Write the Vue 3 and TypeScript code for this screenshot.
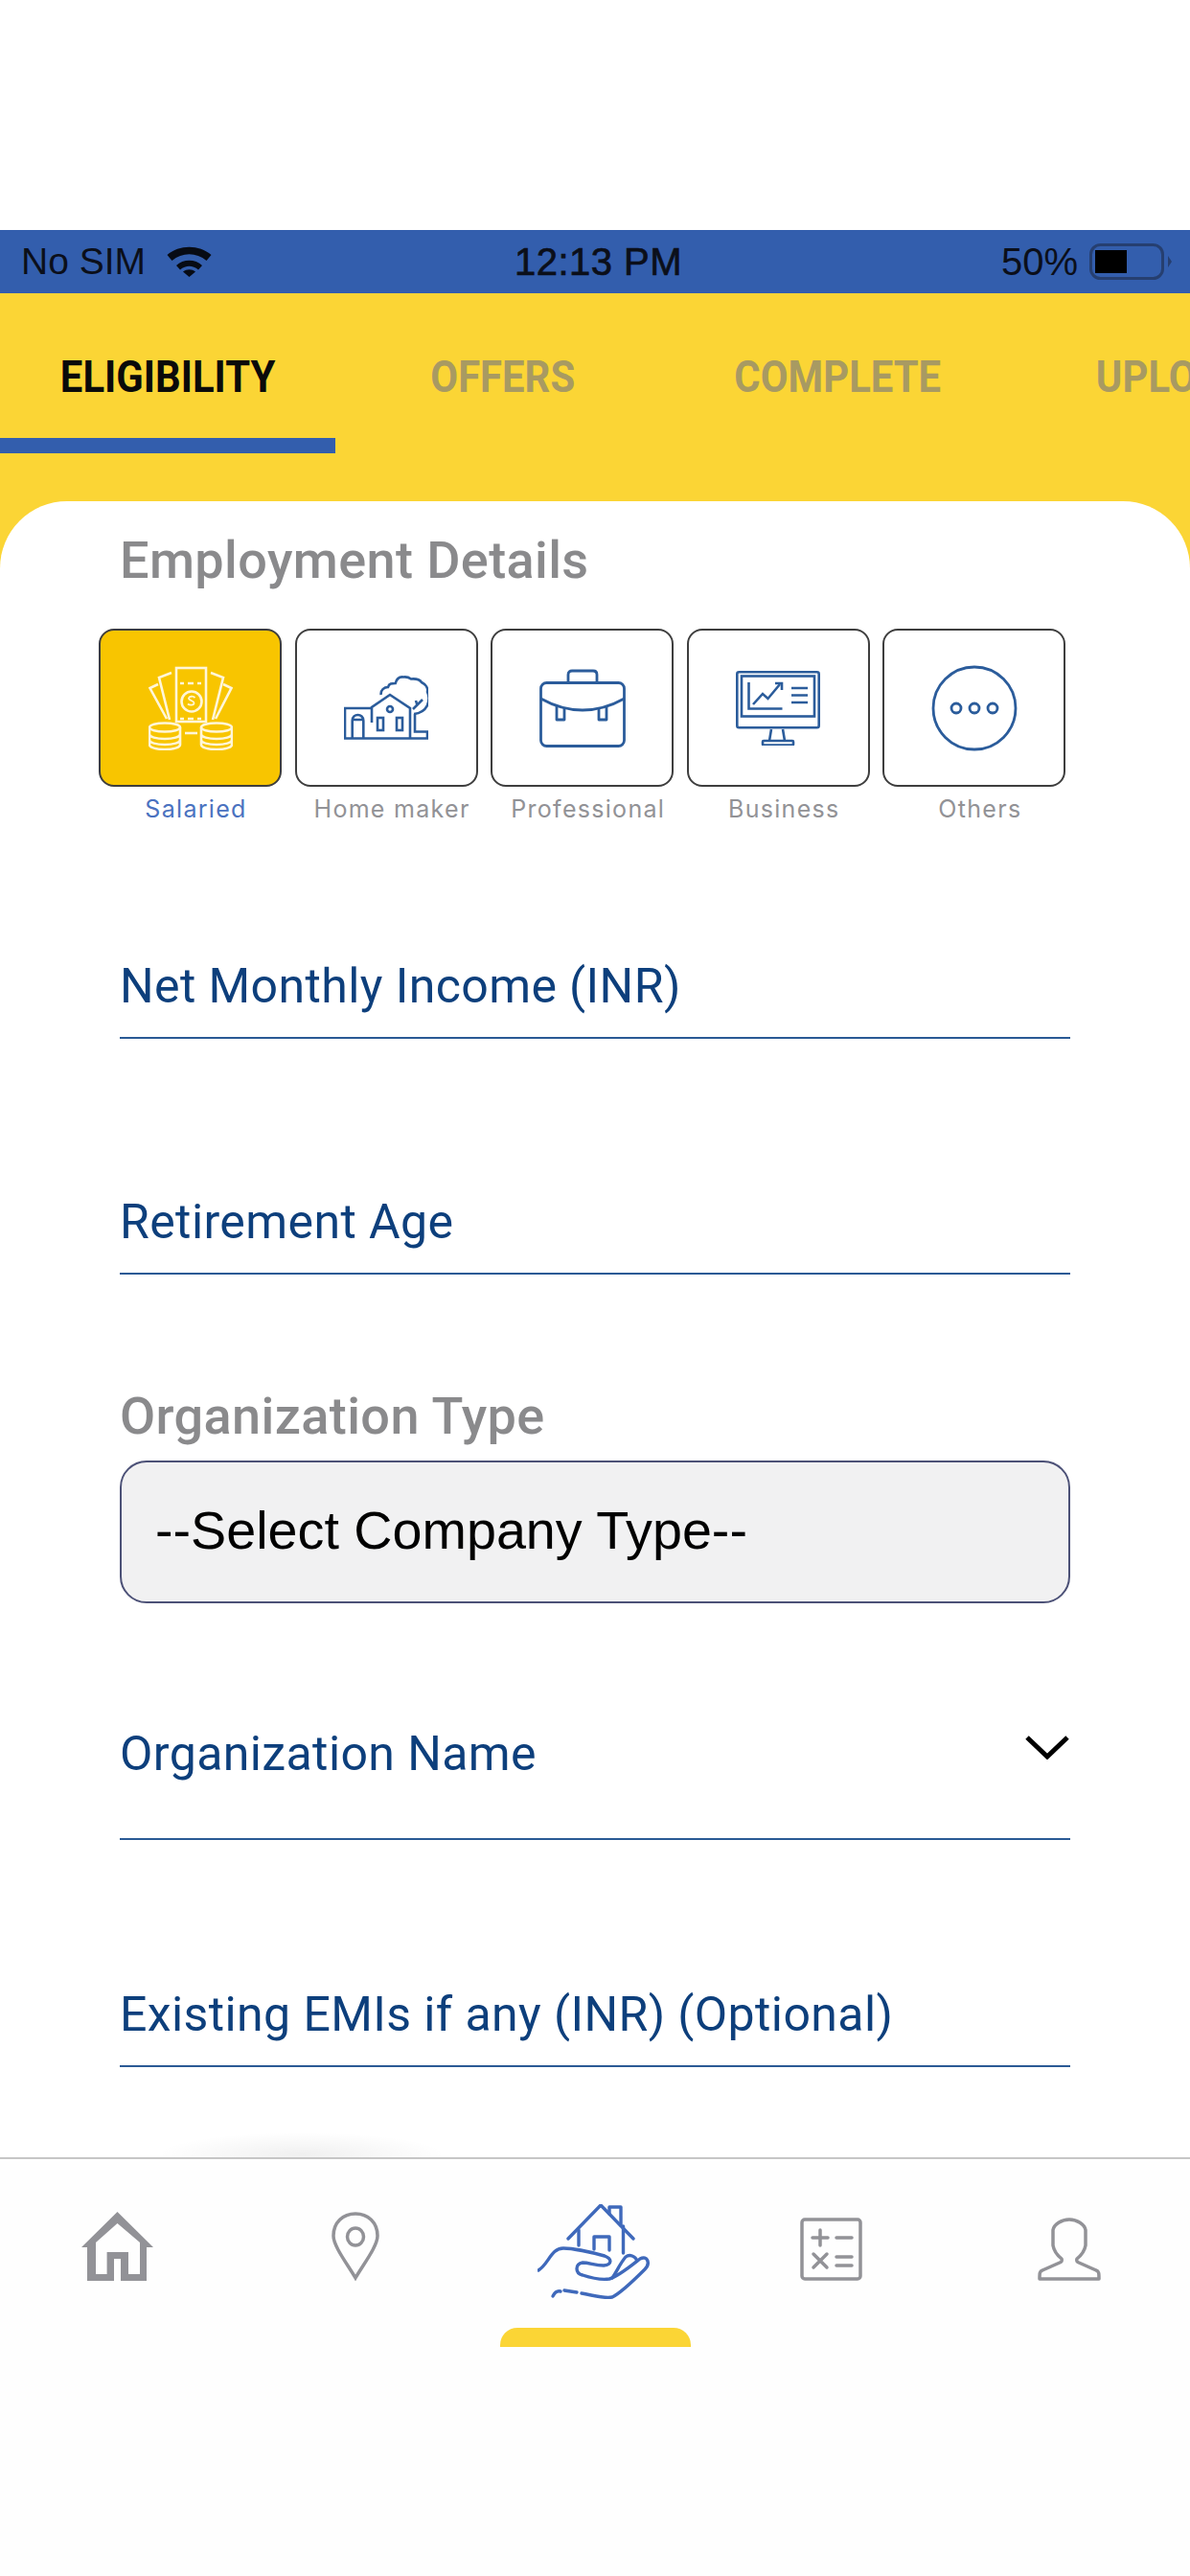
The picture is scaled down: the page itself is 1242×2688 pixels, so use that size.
<script setup lang="ts">
const tabs = ['ELIGIBILITY', 'OFFERS', 'COMPLETE', 'UPLOAD']
const tiles = [
  { key: 'salaried', label: 'Salaried' },
  { key: 'home', label: 'Home maker' },
  { key: 'pro', label: 'Professional' },
  { key: 'biz', label: 'Business' },
  { key: 'other', label: 'Others' },
]
</script>

<template>
  <div class="page">
    <div class="top-space"></div>
    <header class="status">
      <div class="status-left">
        <span>No SIM</span>
        <svg width="47" height="32" viewBox="0 0 47 32" fill="#070b14">
          <path d="M0.500 9C13-2 34-2 46.500 9L41.500 15C31 6 16 6 5.500 15Z" />
          <path d="M10 20C17 13 30 13 37 20L33 24.500C27 19.500 20 19.500 14 24.500Z" />
          <path d="M17 26.500C21 23.500 26 23.500 30 26.500L23.500 32Z" />
        </svg>
      </div>
      <div class="status-time">12:13 PM</div>
      <div class="status-right">
        <span>50%</span>
        <svg width="86" height="38" viewBox="0 0 86 38">
          <rect x="1.500" y="1.500" width="75" height="35" rx="10" fill="none" stroke="#263f70" stroke-width="3" />
          <rect x="6" y="7" width="33" height="24" fill="#000" />
          <path d="M82 13L86 19L82 25Z" fill="#263f70" />
        </svg>
      </div>
    </header>

    <main class="shell">
      <nav class="tabs">
        <div v-for="(t, i) in tabs" :key="t" class="tab" :class="{ active: i === 0 }">
          <span class="tab-text">{{ t }}</span>
        </div>
      </nav>

      <section class="card">
        <h2 class="title first">Employment Details</h2>
        <div class="tiles">
          <div v-for="(t, i) in tiles" :key="t.key" class="tile-col">
            <div class="tile" :class="{ selected: i === 0 }">
              <svg v-if="t.key === 'salaried'" width="88" height="88" viewBox="0 0 88 88" fill="none" stroke="#fff6d8" stroke-width="2.600">
                <rect x="29" y="2" width="31" height="56" />
                <path d="M33 18h4M41 18h6M51 18h4M33 55h4M41 55h6M51 55h4" />
                <circle cx="45" cy="37" r="10.500" />
                <path d="M48.500 33c-2-2-6-1.500-6.500 .5-.6 2.500 6 2.500 5.500 5.500-.4 2-4.500 2.300-6.500 .5" stroke-width="1.800" />
                <path d="M22 56L11 12L24 7M65 7L78 12L67 56" />
                <path d="M19 55L1.500 23L10 19M78 19L86.500 23L70 55" />
                <ellipse cx="17" cy="64" rx="16" ry="4.500" />
                <path d="M1 64v18c0 3 7 5 16 5s16-2 16-5V64M1 71c0 3 7 5 16 5s16-2 16-5M1 77c0 3 7 5 16 5s16-2 16-5" />
                <ellipse cx="71" cy="64" rx="16" ry="4.500" />
                <path d="M55 64v18c0 3 7 5 16 5s16-2 16-5V64M55 71c0 3 7 5 16 5s16-2 16-5M55 77c0 3 7 5 16 5s16-2 16-5" />
                <path d="M38 70h13" />
              </svg>
              <svg v-else-if="t.key === 'home'" width="88" height="68" viewBox="0 0 88 68" fill="none" stroke="#2b5c9b" stroke-width="2.600">
                <path d="M29 34H1V65.500H87V58.500H74V40" />
                <path d="M29 49V33L48 20L69 34V65M69 34" />
                <rect x="35" y="44" width="6" height="13" />
                <rect x="55" y="44" width="6" height="13" />
                <circle cx="48" cy="35" r="3" />
                <path d="M8.700 65V47C8.700 39 20.300 39 20.300 47V65M8.700 46H20.300" />
                <path d="M38.700 20C38 15 42 12 46 12C47 8 50 8 53.700 8C55 3 58 1 62 1.500C66 1 68 2 70 3.500C75 3 79 4 81 7C85 9 88 13 87 17C89 21 89 26 87 31C85 35 82 39 73 40" />
                <path d="M72 35L82 25M76.500 31L75 26" />
              </svg>
              <svg v-else-if="t.key === 'pro'" width="90" height="82" viewBox="0 0 90 82" fill="none" stroke="#2b5c9b" stroke-width="2.800" stroke-linejoin="round">
                <rect x="1.500" y="14.500" width="87" height="66" rx="6" />
                <path d="M30 14V6C30 3 32 2 34 2H56C58 2 60 3 60 6V14" />
                <path d="M1.500 31C14 38 30 43 45 43C60 43 76 38 88.500 31" />
                <path d="M18 38V53H26V41M62 41V53H70V38" />
              </svg>
              <svg v-else-if="t.key === 'biz'" width="88" height="78" viewBox="0 0 88 78" fill="none" stroke="#2b5c9b" stroke-width="2.600">
                <rect x="1.300" y="1.300" width="85.400" height="58" rx="2" />
                <rect x="6" y="5.500" width="76" height="42" />
                <path d="M13.500 12V39.500H48.500" />
                <path d="M18 35L28 24L33.500 29L46 14" />
                <path d="M41 13H48V20" />
                <path d="M58 18H75M58 25.500H75M58 33H75" />
                <path d="M37 61L35 73M49 61L51 73" />
                <rect x="28" y="73" width="32" height="4.500" rx="1" />
              </svg>
              <svg v-else width="90" height="90" viewBox="0 0 90 90" fill="none" stroke="#2b5c9b" stroke-width="2.800">
                <circle cx="45" cy="45" r="43" />
                <circle cx="26" cy="45" r="5" />
                <circle cx="45" cy="45" r="5" />
                <circle cx="64" cy="45" r="5" />
              </svg>
            </div>
            <div class="tile-label" :class="{ on: i === 0 }">{{ t.label }}</div>
          </div>
        </div>

        <div class="field f1"><span class="field-label">Net Monthly Income (INR)</span></div>
        <div class="field f2"><span class="field-label">Retirement Age</span></div>

        <h2 class="title second">Organization Type</h2>
        <div class="select">--Select Company Type--</div>

        <div class="field f3">
          <span class="field-label">Organization Name</span>
          <svg class="chev" width="46" height="26" viewBox="0 0 46 26" fill="none" stroke="#000" stroke-width="5">
            <path d="M2 3L23 23L44 3" />
          </svg>
        </div>
        <div class="field f4"><span class="field-label">Existing EMIs if any (INR) (Optional)</span></div>
        <div class="blob"></div>
      </section>
    </main>

    <footer class="nav">
      <div class="nav-grid">
        <div class="nav-cell">
          <svg width="75" height="72" viewBox="0 0 75 72">
            <path fill="#929297" fill-rule="evenodd" d="M37.500 0L75 37H68V72H41V49H34V72H6V37H0ZM37.500 12L15 32V65H26.600V42H49V65H61V32Z" />
          </svg>
        </div>
        <div class="nav-cell">
          <svg width="52" height="72" viewBox="0 0 52 72" fill="none" stroke="#929297" stroke-width="3.500">
            <path d="M26 69C18 55 3 36 3 25C3 11 13 2 26 2C39 2 49 11 49 25C49 36 34 55 26 69Z" />
            <ellipse cx="26" cy="26" rx="8.500" ry="9" />
          </svg>
        </div>
        <div class="nav-cell mid">
          <svg width="119" height="100" viewBox="0 0 119 100" fill="none" stroke="#3f69bb" stroke-width="3.400" stroke-linecap="round" stroke-linejoin="round">
            <path d="M32 36L66 1L100 36" />
            <path d="M75 10V3H87V22" />
            <path d="M43 27V43M89.500 23V51" />
            <path d="M59 47V34H75V48" />
            <path d="M1 69C12 62 14 46 27 46C36 46 56 50 70 54C78 57 78 63 69 64C60 64 54 61 47 61C39 62 39 72 47 74C56 77 68 79 75 78C85 75 98 64 107 57C115 53 118 62 112 68C100 80 88 92 78 97C70 99 58 95 46 93" />
            <path d="M24 91C20 90 18 92 16 96M41 92L28 90" />
            <path d="M78 77C83 70 86 62 92 55C96 52 102 54 104 59" />
          </svg>
        </div>
        <div class="nav-cell">
          <svg width="65" height="66" viewBox="0 0 65 66" fill="none" stroke="#929297" stroke-width="3.500" stroke-linecap="round">
            <rect x="2" y="2" width="61" height="62" rx="3" />
            <path d="M13 21H29M21 13V29M38 21H54" />
            <path d="M14 38L28 52M28 38L14 52" />
            <path d="M38 41H54M38 50H54" />
          </svg>
        </div>
        <div class="nav-cell">
          <svg width="66" height="66" viewBox="0 0 66 66" fill="none" stroke="#929297" stroke-width="3.500" stroke-linejoin="round">
            <path d="M33 2C25 2 17 7 16 13V29C17 35 20 39 25 43C26 45 25 46 23 47L5 55C2 56 2 58 2 64H64C64 58 64 56 61 55L43 47C41 46 40 45 41 43C46 39 49 35 50 29V13C49 7 41 2 33 2Z" />
          </svg>
        </div>
      </div>
      <div class="pill"></div>
    </footer>
  </div>
</template>

<style scoped>
.page {
  width: 1242px;
  height: 2688px;
  display: flex;
  flex-direction: column;
  overflow: hidden;
  background: #fff;
  font-family: Roboto, "Liberation Sans", sans-serif;
}
.top-space { height: 240px; flex: none; }
.status {
  height: 66px;
  flex: none;
  background: #335ead;
  display: grid;
  grid-template-columns: 1fr auto 1fr;
  align-items: center;
  padding: 0 19px 0 22px;
  font-family: "Liberation Sans", sans-serif;
  font-size: 39px;
  color: #0b0f1a;
}
.status-left { display: flex; align-items: center; gap: 22px; }
.status-time {
  font-size: 40px;
  letter-spacing: 0.500px;
  -webkit-text-stroke: 0.700px #0b0f1a;
  margin-left: 4px;
}
.status-right { display: flex; align-items: center; justify-content: flex-end; gap: 12px; font-size: 40px; }
.shell {
  flex: 1;
  display: flex;
  flex-direction: column;
  background: #fbd535;
  min-height: 0;
}
.tabs { height: 217px; flex: none; display: flex; overflow: hidden; }
.tab {
  flex: 0 0 349.500px;
  height: 129px;
  padding-top: 22px;
  display: flex;
  align-items: center;
  justify-content: center;
  border-bottom: 16px solid transparent;
  box-sizing: content-box;
  font-weight: 700;
  font-size: 47px;
  color: #a89a62;
}
.tab.active { color: #0a0a0a; border-bottom-color: #335ead; }
.tab-text { white-space: nowrap; transform: scaleX(0.89); }
.card {
  position: relative;
  flex: 1;
  background: #fff;
  border-radius: 70px 70px 0 0;
  padding: 0 125px;
  min-height: 0;
}
.title {
  margin: 0;
  font-size: 54px;
  font-weight: 500;
  line-height: 60px;
  letter-spacing: 0.400px;
  color: #8a8a8c;
}
.title.first { margin-top: 32px; }
.tiles {
  display: grid;
  grid-template-columns: repeat(5, 191px);
  column-gap: 13.600px;
  margin: 41px 0 0 -22px;
  width: 1010px;
}
.tile {
  height: 165px;
  box-sizing: border-box;
  border: 2px solid #3e3e3e;
  border-radius: 16px;
  display: flex;
  align-items: center;
  justify-content: center;
  background: #fff;
}
.tile.selected { background: #f8c500; }
.tile-label {
  margin-top: 8px;
  padding-left: 12px;
  text-align: center;
  font-family: Inter, Roboto, sans-serif;
  font-size: 25px;
  line-height: 30px;
  letter-spacing: 1.300px;
  color: #929296;
  white-space: nowrap;
}
.tile-label.on { color: #4a72c0; }
.field {
  box-sizing: border-box;
  height: 106px;
  border-bottom: 2px solid #2a5a95;
  display: flex;
  align-items: flex-end;
  padding-bottom: 23px;
}
.field-label {
  font-size: 50px;
  line-height: 60px;
  color: #0d3f7c;
  letter-spacing: 0.400px;
}
.f1 { margin-top: 119px; }
.f2 { margin-top: 140px; }
.title.second { margin-top: 118px; }
.select {
  margin-top: 16px;
  height: 149px;
  box-sizing: border-box;
  border: 2px solid #4c5177;
  border-radius: 28px;
  background: #f1f1f2;
  padding: 0 0 3px 35px;
  display: flex;
  align-items: center;
  font-family: "Liberation Sans", sans-serif;
  font-size: 55.700px;
  color: #000;
}
.f3 { margin-top: 141px; padding-bottom: 58px; justify-content: space-between; }
.chev { margin-bottom: 24px; margin-right: 1px; }
.f4 { margin-top: 131px; }
.blob {
  position: absolute;
  left: 165px;
  bottom: -20px;
  width: 300px;
  height: 46px;
  background: radial-gradient(closest-side, rgba(0,0,0,0.06), rgba(0,0,0,0));
}
.nav {
  position: relative;
  flex: none;
  height: 437px;
  box-sizing: border-box;
  background: #fefefe;
  border-top: 2px solid #c6c6c6;
}
.nav-grid {
  display: grid;
  grid-template-columns: repeat(5, 248.500px);
  margin-left: -2px;
  padding-top: 47px;
}
.nav-cell { display: flex; justify-content: center; align-items: flex-end; height: 80px; }
.nav-cell svg { flex: none; }
.nav-cell.mid { height: 100px; align-items: flex-start; }
.nav-cell.mid svg { margin-left: 3px; }
.pill {
  width: 199px;
  height: 20px;
  margin: 29px 0 0 522px;
  background: #fbd535;
  border-radius: 18px 18px 0 0;
}
</style>
